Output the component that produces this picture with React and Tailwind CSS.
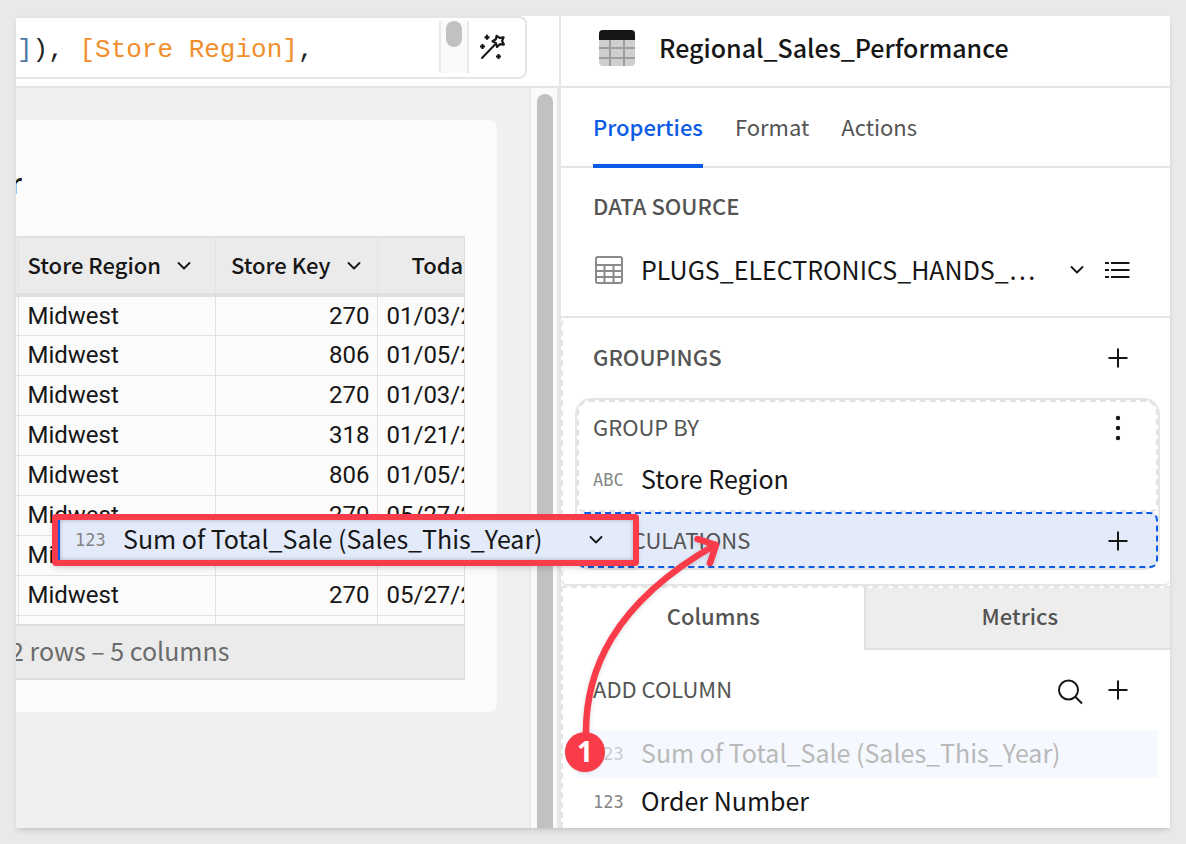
import React from "react";

const sans = "font-['Noto_Sans_CJK_SC',sans-serif]";

const rows = [
  ["Midwest", "270", "01/03/2024"],
  ["Midwest", "806", "01/05/2024"],
  ["Midwest", "270", "01/03/2024"],
  ["Midwest", "318", "01/21/2024"],
  ["Midwest", "806", "01/05/2024"],
  ["Midwest", "270", "05/27/2024"],
  ["Midwest", "270", "05/27/2024"],
  ["Midwest", "270", "05/27/2024"],
];

function Chevron({ className = "" }) {
  return (
    <svg viewBox="0 0 14 8" className={"h-2 w-3.5 shrink-0 " + className} fill="none" stroke="currentColor" strokeWidth="1.8" strokeLinecap="round" strokeLinejoin="round" aria-hidden="true">
      <path d="M1.5 1 7 6.5 12.5 1" />
    </svg>
  );
}

function Plus() {
  return (
    <svg viewBox="0 0 20 20" className="size-5" fill="none" stroke="currentColor" strokeWidth="2" aria-hidden="true">
      <path d="M10 0.5v19M0.5 10h19" />
    </svg>
  );
}

function Wand() {
  return (
    <svg viewBox="0 0 28 28" className="size-7" fill="none" stroke="currentColor" strokeWidth="2" aria-hidden="true">
      <path d="M3 24 16 10.500" strokeLinecap="round" />
      <path d="M17.600 1.800 20.600 3.900 24.600 3.300 23.100 6.900 24.900 10.600 20.900 10.200 18 13 17 9.100 13.500 7.200 16.900 5.300Z" strokeLinejoin="round" strokeWidth="2.200" />
      <path d="M8 .8v5M5.500 3.300h5M3.500 10v5M1 12.500h5M19.500 20v5M17 22.500h5" strokeWidth="2.200" />
    </svg>
  );
}

function TableLogo() {
  return (
    <svg viewBox="0 0 36 36" className="size-9 shrink-0" aria-hidden="true">
      <rect width="36" height="36" rx="4" fill="#cfcfcf" />
      <path d="M11 10v26M25 10v26M0 18h36M0 28h36" stroke="#9e9e9e" strokeWidth="2" />
      <path d="M0 10V4a4 4 0 0 1 4-4h28a4 4 0 0 1 4 4v6Z" fill="#161616" />
    </svg>
  );
}

function SourceIcon() {
  return (
    <svg viewBox="0 0 28 28" className="ml-0.5 size-7 shrink-0" fill="none" stroke="#8a8a8a" strokeWidth="2" aria-hidden="true">
      <rect x="1" y="1" width="26" height="26" rx="2" />
      <path d="M1 9h26M1 15h26M1 21h26M9.500 9v18M18.500 9v18" />
    </svg>
  );
}

function ListIcon() {
  return (
    <svg viewBox="0 0 26 18" className="h-[18px] w-[26px]" stroke="currentColor" strokeWidth="2" aria-hidden="true">
      <path d="M7 2h18.500M7 9h18.500M7 16h18.500M1 2h4M1 9h4M1 16h4" />
    </svg>
  );
}

function TypeTag({ children }) {
  return (
    <span className="w-8 shrink-0 font-['DejaVu_Sans_Mono',monospace] text-[17px] leading-6 text-[#858585]">{children}</span>
  );
}

function Formula() {
  return (
    <div className="flex h-[72px] border-b-2 border-[#e5e5e5] bg-white">
      <div className="mr-8 flex h-[63px] flex-1 items-center rounded-r-lg border-2 border-l-0 border-[#e5e5e5]">
        <code className="flex-1 overflow-hidden whitespace-pre pl-px pt-1 font-['Liberation_Mono',monospace] text-[26px] leading-8 text-[#1f1f1f]">
          <span className="text-[#4e79a7]">]</span>),{" "}
          <span className="text-[#f28e2b]">[Store Region]</span>,
        </code>
        <div className="mb-0.5 flex h-[52px] w-[30px] justify-center border-x-2 border-[#e9e9e9] bg-[#fafafa]">
          <div className="h-[26px] w-4 rounded-full bg-[#c1c1c1]" />
        </div>
        <button aria-label="Formula assistant" className="flex w-14 items-center pl-2.5 text-[#161616]">
          <Wand />
        </button>
      </div>
    </div>
  );
}

function DataTable() {
  return (
    <div className="mr-8 border-y-2 border-r border-[#dfdfdf]">
      <div className="h-[386px] overflow-hidden">
        <table className="w-full table-fixed border-collapse">
          <colgroup>
            <col className="w-0.5" />
            <col className="w-[197px]" />
            <col className="w-[162px]" />
            <col />
          </colgroup>
          <thead>
            <tr className={"h-[57px] border-b-4 border-[#dfdfdf] bg-[#ebebeb] text-[22px] leading-8 text-[#161616] " + sans}>
              <td className="border-r border-[#e2e2e2]" />
              <th className="border-r border-[#e2e2e2] px-0 font-medium">
                <span className="flex items-center gap-4 pl-[9px]">
                  <span className="pb-1">Store Region</span>
                  <Chevron />
                </span>
              </th>
              <th className="border-r border-[#e2e2e2] px-0 font-medium">
                <span className="flex items-center justify-end gap-4 pr-4">
                  <span className="pb-1">Store Key</span>
                  <Chevron />
                </span>
              </th>
              <th className="overflow-hidden px-0 text-left font-medium">
                <span className="block pb-1 pl-[34px]">Today</span>
              </th>
            </tr>
          </thead>
          <tbody className="font-[Roboto,sans-serif] text-2xl leading-8 text-[#161616]">
            {rows.map((row, i) => (
              <tr key={i} className="h-10 border-b border-[#e2e2e2]">
                <td className="border-r border-[#e2e2e2]" />
                <td className="border-r border-[#e2e2e2] pl-[9px]">{row[0]}</td>
                <td className="border-r border-[#e2e2e2] pr-[7px] text-right">{row[1]}</td>
                <td className="overflow-hidden whitespace-nowrap pl-[9px]">{row[2]}</td>
              </tr>
            ))}
            <tr className="h-10">
              <td className="border-r border-[#e2e2e2]" />
              <td className="border-r border-[#e2e2e2]" />
              <td className="border-r border-[#e2e2e2]" />
              <td />
            </tr>
          </tbody>
        </table>
      </div>
      <p className={"flex h-[54px] items-center overflow-hidden border-t-2 border-[#dfdfdf] bg-[#ebebeb] pb-0.5 text-[25px] text-[#6b6b6b] " + sans}>
        <span className="-ml-1.5">2 rows – 5 columns</span>
      </p>
    </div>
  );
}

function Canvas() {
  return (
    <div className="flex flex-1 bg-[#f0f0f0]">
      <div className="min-w-0 flex-1 pr-8 pt-8">
        <div className="rounded-r-lg bg-[#fbfbfb] pb-8">
          <h2 className={"flex h-[116px] w-1.5 items-center justify-end overflow-hidden pt-2 text-[28px] font-medium text-[#161616] " + sans}>
            <span>r</span>
          </h2>
          <DataTable />
        </div>
      </div>
      <div className="flex w-[30px] justify-end border-x-2 border-[#e8e8e8] bg-[#fafafa] pr-1 pt-1.5">
        <div className="w-4 rounded-t-full bg-[#c1c1c1]" />
      </div>
    </div>
  );
}

function Panel() {
  return (
    <aside className={"flex min-w-0 flex-1 flex-col bg-white text-[#161616] " + sans}>
      <header className="flex h-[72px] items-center gap-6 border-b-2 border-[#e5e5e5] pb-1.5 pl-[38px]">
        <TableLogo />
        <h1 className="pb-0.5 text-[25px] font-medium leading-8">Regional_Sales_Performance</h1>
      </header>

      <nav className="flex h-20 gap-8 border-b-2 border-[#e5e5e5] pl-8 text-[22px] text-[#545454]">
        <button className="-mb-0.5 border-b-4 border-[#0b5be6] font-medium text-[#0b5be6]">Properties</button>
        <button className="pb-0.5">Format</button>
        <button className="pb-0.5">Actions</button>
      </nav>

      <section className="flex h-[150px] flex-col border-b-2 border-[#e5e5e5] pl-8 pr-10 pt-[21px]">
        <h2 className="text-[22px] font-medium leading-8 text-[#545454]">DATA SOURCE</h2>
        <div className="flex flex-1 items-center pt-0.5">
          <SourceIcon />
          <button className="ml-[18px] flex min-w-0 flex-1 items-center">
            <span className="min-w-0 flex-1 pb-0.5 text-left text-[25px] leading-8">PLUGS_ELECTRONICS_HANDS_…</span>
            <Chevron />
          </button>
          <button aria-label="Columns" className="ml-5">
            <ListIcon />
          </button>
        </div>
      </section>

      <section className="h-[268px] rounded-md border-b-2 border-l-2 border-[#e5e5e5] pl-3 pr-2.5 [border-left-style:dashed]">
        <div className="flex h-20 items-center justify-between pl-[18px] pr-8">
          <h2 className="pb-1 text-[22px] font-medium text-[#545454]">GROUPINGS</h2>
          <button aria-label="Add grouping">
            <Plus />
          </button>
        </div>
        <div className="rounded-2xl border-2 border-[#e5e5e5]">
          <div className="h-28 rounded-t-xl rounded-b-md border-2 border-dashed border-[#e2e2e2] pl-3.5 pr-7">
            <div className="flex h-[52px] items-center justify-between">
              <h3 className="pb-1 text-[22px] text-[#545454]">GROUP BY</h3>
              <button aria-label="Grouping menu" className="w-5">
                <svg viewBox="0 0 20 28" className="h-7 w-5" fill="currentColor" aria-hidden="true">
                  <circle cx="10" cy="4" r="2.200" />
                  <circle cx="10" cy="14" r="2.200" />
                  <circle cx="10" cy="24" r="2.200" />
                </svg>
              </button>
            </div>
            <div className="flex h-[52px] items-center gap-4">
              <TypeTag>ABC</TypeTag>
              <span className="pb-0.5 text-[25px]">Store Region</span>
            </div>
          </div>
          <div className="flex h-14 items-center justify-between rounded-lg border-2 border-dashed border-[#0b5be6] bg-[#e3eaf9] pl-3.5 pr-7">
            <h3 className="pb-0.5 text-[22px] text-[#545454]">CALCULATIONS</h3>
            <button aria-label="Add calculation" className="pt-0.5">
              <Plus />
            </button>
          </div>
        </div>
      </section>

      <section className="flex-1 border-l-2 border-t-2 border-dashed border-[#e5e5e5]">
        <div className="flex h-[62px] text-[22px] font-medium text-[#545454]">
          <button className="flex-1 pb-2">Columns</button>
          <button className="flex-1 border-b-2 border-l-2 border-[#e0e0e0] bg-[#ededed] pb-1.5 pl-1">Metrics</button>
        </div>
        <div className="flex h-20 items-center justify-between pl-[30px] pr-[42px]">
          <h3 className="pb-1 text-[22px] text-[#545454]">ADD COLUMN</h3>
          <div className="flex items-center gap-6">
            <button aria-label="Search columns" className="pt-1">
              <svg viewBox="0 0 26 26" className="size-[26px]" fill="none" stroke="currentColor" strokeWidth="2" aria-hidden="true">
                <circle cx="10.500" cy="11" r="9.500" />
                <path d="m17.500 18 6.500 6.500" />
              </svg>
            </button>
            <button aria-label="Add column">
              <Plus />
            </button>
          </div>
        </div>
        <ul className="pl-3.5 pr-3 text-[25px]">
          <li className="flex h-12 items-center gap-4 bg-[#f5f8fe] pl-4">
            <span className="flex opacity-40">
              <TypeTag>123</TypeTag>
            </span>
            <span className="pb-0.5 text-[#b9b9b9]">Sum of Total_Sale (Sales_This_Year)</span>
          </li>
          <li className="flex h-12 items-center gap-4 pl-4">
            <TypeTag>123</TypeTag>
            <span className="pb-0.5">Order Number</span>
          </li>
        </ul>
      </section>
    </aside>
  );
}

function DragOverlay() {
  return (
    <>
      <div className={"absolute left-9 top-[498px] flex h-[52px] w-[587px] items-center rounded border-[6px] border-[#fa3c4a] bg-[#e3eaf9] shadow-md " + sans}>
        <div className="flex h-full flex-1 items-center gap-4 border-l-2 border-[#0b5be6] pl-[15px] pr-[30px] text-[25px] text-[#161616] shadow-[inset_0_0_4px_rgba(0,0,0,0.25)]">
          <TypeTag>123</TypeTag>
          <span className="flex-1 whitespace-nowrap pb-0.5">Sum of Total_Sale (Sales_This_Year)</span>
          <Chevron />
        </div>
      </div>
      <svg viewBox="545 520 190 240" className="pointer-events-none absolute left-[529px] top-[504px] h-60 w-[190px] drop-shadow-sm" fill="none" stroke="#fa3c4a" strokeWidth="6.500" strokeLinecap="round" strokeLinejoin="round" aria-hidden="true">
        <path d="M586 736C585 672 612 604 715 545" />
        <path d="m697.500 539 18.500 6-6 18" />
      </svg>
      <div className="absolute left-[549px] top-[716px] flex size-10 items-center justify-center rounded-full bg-[#fa3c4a] pb-0.5 font-['Noto_Sans',sans-serif] text-[28px] font-bold text-white shadow-sm">
        1
      </div>
    </>
  );
}

export default function App() {
  return (
    <div className="flex min-h-screen bg-[#e9e9e9] p-4">
      <main className="relative flex flex-1 bg-white shadow-md">
        <div className="flex w-[545px] shrink-0 flex-col border-r-2 border-[#e5e5e5]">
          <Formula />
          <Canvas />
        </div>
        <Panel />
        <DragOverlay />
      </main>
    </div>
  );
}
